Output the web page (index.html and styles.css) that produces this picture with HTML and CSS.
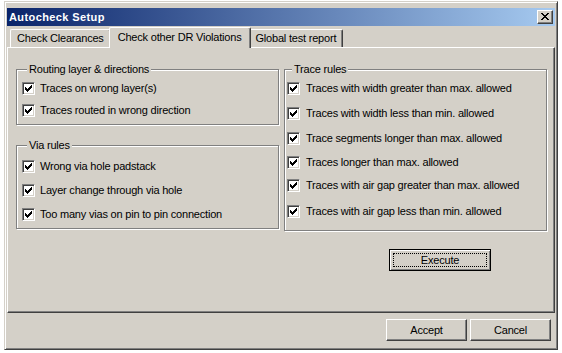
FILE: index.html
```html
<!DOCTYPE html>
<html lang="en">
<head>
  <meta charset="UTF-8" />
  <title>Autocheck Setup</title>
  <link rel="stylesheet" href="styles.css">
</head>
<body>
  <div class="window">
    <!-- Title Bar -->
    <div class="titlebar">
      <span class="title">Autocheck Setup</span>
      <button class="close-btn" aria-label="Close">
        <svg width="8" height="7" viewBox="0 0 8 7" shape-rendering="crispEdges">
          <path d="M0 0h2v1h-2zM6 0h2v1h-2zM1 1h2v1h-2zM5 1h2v1h-2zM2 2h4v1h-4zM3 3h2v1h-2zM2 4h4v1h-4zM1 5h2v1h-2zM5 5h2v1h-2zM0 6h2v1h-2zM6 6h2v1h-2z" fill="#000"/>
        </svg>
      </button>
    </div>

    <!-- Tabs -->
    <div class="tabs">
      <div class="tab">Check Clearances</div>
      <div class="tab active">Check other DR Violations</div>
      <div class="tab">Global test report</div>
    </div>

    <div class="tab-panel">
      <div class="column">
        <fieldset class="group group-routing">
          <legend>Routing layer &amp; directions</legend>
          <div class="check">
            <span class="box"><svg width="7" height="7" viewBox="0 0 7 7" shape-rendering="crispEdges"><path d="M0 2h1v3H0zM1 3h1v3H1zM2 4h1v3H2zM3 3h1v3H3zM4 2h1v3H4zM5 1h1v3H5zM6 0h1v3H6z"/></svg></span>
            Traces on wrong layer(s)
          </div>
          <div class="check gap-9">
            <span class="box"><svg width="7" height="7" viewBox="0 0 7 7" shape-rendering="crispEdges"><path d="M0 2h1v3H0zM1 3h1v3H1zM2 4h1v3H2zM3 3h1v3H3zM4 2h1v3H4zM5 1h1v3H5zM6 0h1v3H6z"/></svg></span>
            Traces routed in wrong direction
          </div>
        </fieldset>

        <fieldset class="group group-via">
          <legend>Via rules</legend>
          <div class="check">
            <span class="box"><svg width="7" height="7" viewBox="0 0 7 7" shape-rendering="crispEdges"><path d="M0 2h1v3H0zM1 3h1v3H1zM2 4h1v3H2zM3 3h1v3H3zM4 2h1v3H4zM5 1h1v3H5zM6 0h1v3H6z"/></svg></span>
            Wrong via hole padstack
          </div>
          <div class="check gap-11">
            <span class="box"><svg width="7" height="7" viewBox="0 0 7 7" shape-rendering="crispEdges"><path d="M0 2h1v3H0zM1 3h1v3H1zM2 4h1v3H2zM3 3h1v3H3zM4 2h1v3H4zM5 1h1v3H5zM6 0h1v3H6z"/></svg></span>
            Layer change through via hole
          </div>
          <div class="check gap-11">
            <span class="box"><svg width="7" height="7" viewBox="0 0 7 7" shape-rendering="crispEdges"><path d="M0 2h1v3H0zM1 3h1v3H1zM2 4h1v3H2zM3 3h1v3H3zM4 2h1v3H4zM5 1h1v3H5zM6 0h1v3H6z"/></svg></span>
            Too many vias on pin to pin connection
          </div>
        </fieldset>
      </div>

      <div class="column">
        <fieldset class="group group-trace">
          <legend>Trace rules</legend>
          <div class="check">
            <span class="box"><svg width="7" height="7" viewBox="0 0 7 7" shape-rendering="crispEdges"><path d="M0 2h1v3H0zM1 3h1v3H1zM2 4h1v3H2zM3 3h1v3H3zM4 2h1v3H4zM5 1h1v3H5zM6 0h1v3H6z"/></svg></span>
            Traces with width greater than max. allowed
          </div>
          <div class="check gap-12">
            <span class="box"><svg width="7" height="7" viewBox="0 0 7 7" shape-rendering="crispEdges"><path d="M0 2h1v3H0zM1 3h1v3H1zM2 4h1v3H2zM3 3h1v3H3zM4 2h1v3H4zM5 1h1v3H5zM6 0h1v3H6z"/></svg></span>
            Traces with width less than min. allowed
          </div>
          <div class="check gap-12">
            <span class="box"><svg width="7" height="7" viewBox="0 0 7 7" shape-rendering="crispEdges"><path d="M0 2h1v3H0zM1 3h1v3H1zM2 4h1v3H2zM3 3h1v3H3zM4 2h1v3H4zM5 1h1v3H5zM6 0h1v3H6z"/></svg></span>
            Trace segments longer than max. allowed
          </div>
          <div class="check gap-11">
            <span class="box"><svg width="7" height="7" viewBox="0 0 7 7" shape-rendering="crispEdges"><path d="M0 2h1v3H0zM1 3h1v3H1zM2 4h1v3H2zM3 3h1v3H3zM4 2h1v3H4zM5 1h1v3H5zM6 0h1v3H6z"/></svg></span>
            Traces longer than max. allowed
          </div>
          <div class="check gap-10">
            <span class="box"><svg width="7" height="7" viewBox="0 0 7 7" shape-rendering="crispEdges"><path d="M0 2h1v3H0zM1 3h1v3H1zM2 4h1v3H2zM3 3h1v3H3zM4 2h1v3H4zM5 1h1v3H5zM6 0h1v3H6z"/></svg></span>
            Traces with air gap greater than max. allowed
          </div>
          <div class="check gap-13">
            <span class="box"><svg width="7" height="7" viewBox="0 0 7 7" shape-rendering="crispEdges"><path d="M0 2h1v3H0zM1 3h1v3H1zM2 4h1v3H2zM3 3h1v3H3zM4 2h1v3H4zM5 1h1v3H5zM6 0h1v3H6z"/></svg></span>
            Traces with air gap less than min. allowed
          </div>
        </fieldset>

        <button class="btn btn-default execute-btn"><span class="focus-ring">Execute</span></button>
      </div>
    </div>

    <!-- Dialog Buttons -->
    <div class="dialog-buttons">
      <button class="btn">Accept</button>
      <button class="btn">Cancel</button>
    </div>
  </div>
</body>
</html>
```

FILE: styles.css
```css
/* Win2000 system colours */
:root {
  --face: #d4d0c8;
  --light: #fff;
  --shadow: #808080;
  --dark: #404040;
}

* {
  margin: 0;
  padding: 0;
  box-sizing: border-box;
}
body, button {
  font-family: 'Liberation Sans', Arial, sans-serif;
  font-size: 11px;
  letter-spacing: -0.2px;
  color: #000;
}
body {
  background: #fff;
}

/* Dialog Window */
.window {
  width: 554px;
  height: 349px;
  margin: 1px 0 0 4px;
  background: var(--face);
  border: 1px solid;
  border-color: var(--face) var(--dark) var(--dark) var(--face);
  box-shadow: inset 1px 1px var(--light), inset -1px -1px var(--shadow);
  padding: 6px 2px 2px;
  display: flex;
  flex-direction: column;
}

/* Title Bar */
.titlebar {
  height: 18px;
  display: flex;
  align-items: center;
  justify-content: space-between;
  padding: 0 2px 0 2px;
  background: linear-gradient(to right, #0a246a, #a6caf0);
}
.title {
  color: #fff;
  font-weight: bold;
  letter-spacing: 0.4px;
}
.close-btn {
  width: 16px;
  height: 14px;
  background: var(--face);
  border: 1px solid;
  border-color: var(--light) var(--dark) var(--dark) var(--light);
  box-shadow: inset -1px -1px var(--shadow);
  display: flex;
  align-items: center;
  justify-content: center;
  padding-bottom: 1px;
}

/* Tabs */
.tabs {
  height: 21px;
  display: flex;
  align-items: flex-end;
  padding-left: 3px;
}
.tab {
  height: 18px;
  line-height: 17px;
  padding: 0 6px;
  border-top: 1px solid var(--light);
  border-left: 1px solid var(--light);
  border-right: 1px solid var(--dark);
  box-shadow: inset -1px 0 var(--shadow);
  border-radius: 2px 2px 0 0;
  background: var(--face);
}
.tab.active {
  position: relative;
  z-index: 1;
  height: 21px;
  line-height: 18px;
  margin: 0 -2px -1px;
  padding: 0 8px;
}

/* Tab Panel */
.tab-panel {
  height: 266px;
  border: 1px solid;
  border-color: var(--light) var(--dark) var(--dark) var(--light);
  box-shadow: inset -1px -1px var(--shadow);
  padding: 15px 0 0 8px;
  display: grid;
  grid-template-columns: 263px 263px;
  column-gap: 5px;
  align-items: start;
}
.column {
  display: flex;
  flex-direction: column;
  align-items: flex-start;
}

/* Group Boxes */
.group {
  width: 263px;
  min-width: 0;
  border: 1px solid var(--shadow);
  box-shadow: inset 1px 1px var(--light), 1px 1px var(--light);
  padding: 0;
}
.group legend {
  margin-left: 5px;
  padding: 0 2px;
  line-height: 13px;
  background: var(--face);
}
.group-routing {
  padding: 6px 0 7px 5px;
}
.group-via {
  margin-top: 14px;
  padding: 8px 0 7px 5px;
}
.group-trace {
  padding: 6px 0 12px 2px;
}

/* Checkboxes */
.check {
  height: 13px;
  line-height: 13px;
  display: flex;
  align-items: center;
  gap: 5px;
  white-space: nowrap;
}
.group-trace .check {
  gap: 6px;
}
.gap-9 { margin-top: 9px; }
.gap-10 { margin-top: 10px; }
.gap-11 { margin-top: 11px; }
.gap-12 { margin-top: 12px; }
.gap-13 { margin-top: 13px; }
.box {
  width: 13px;
  height: 13px;
  flex-shrink: 0;
  background: #fff;
  border: 1px solid;
  border-color: var(--shadow) var(--light) var(--light) var(--shadow);
  box-shadow: inset 1px 1px var(--dark), inset -1px -1px var(--face);
  display: flex;
  align-items: center;
  justify-content: center;
}

/* Buttons */
.btn {
  height: 22px;
  width: 81px;
  background: var(--face);
  border: 1px solid;
  border-color: var(--light) var(--dark) var(--dark) var(--light);
  box-shadow: inset -1px -1px var(--shadow);
}
.btn-default {
  border-color: #000;
  box-shadow: inset 1px 1px var(--light), inset -1px -1px var(--shadow);
  padding: 3px;
  display: flex;
}
.focus-ring {
  flex: 1;
  border: 1px dotted #000;
  line-height: 12px;
}
.execute-btn {
  width: 102px;
  margin: 18px 0 0 105px;
}

.dialog-buttons {
  display: flex;
  justify-content: flex-end;
  gap: 3px;
  padding: 6px 4px 0 0;
}
```
